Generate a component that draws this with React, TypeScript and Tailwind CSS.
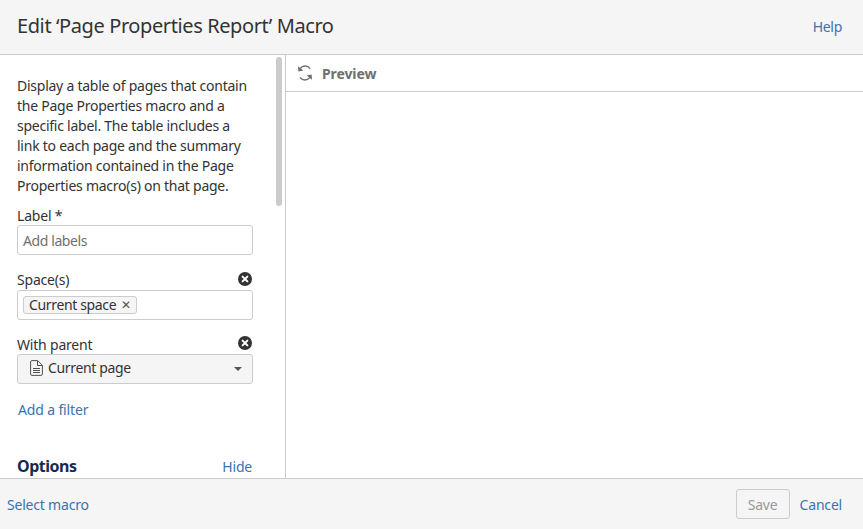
const linkClass = 'text-[14px] leading-5 text-[#3b73af]';

const ClearIcon = ({ className }: { className?: string }) => (
  <svg width="14" height="14" viewBox="0 0 14 14" className={className}>
    <circle cx="7" cy="7" r="7" fill="#333333" />
    <path d="M4.6 4.6l4.8 4.8M9.4 4.6l-4.8 4.8" stroke="#ffffff" strokeWidth="2" strokeLinecap="round" />
  </svg>
);

const RefreshIcon = () => (
  <svg width="16" height="16" viewBox="0 0 16 16" fill="none" className="block">
    <path d="M13.2 3.6A6.4 6.4 0 0 0 3 3.6" stroke="#707070" strokeWidth="1.4" />
    <path d="M1 1.2l.4 5.2 5-.9z" fill="#707070" />
    <path d="M2.8 12.4a6.4 6.4 0 0 0 10.2 0" stroke="#707070" strokeWidth="1.4" />
    <path d="M15 14.8l-.4-5.2-5 .9z" fill="#707070" />
  </svg>
);

const PageIcon = () => (
  <svg width="13" height="16" viewBox="0 0 13 16" fill="none" className="block">
    <path d="M1.8.6h5.9l4.7 4.7v8.6a1.5 1.5 0 0 1-1.5 1.5H1.8a1.3 1.3 0 0 1-1.2-1.5V2a1.3 1.3 0 0 1 1.2-1.4z" stroke="#505050" strokeWidth="1" />
    <path d="M7.5 1v4.5H12" stroke="#505050" strokeWidth="1" />
    <path d="M3 8.5h7M3 10.5h7M3 12.5h7" stroke="#505050" strokeWidth="1" />
  </svg>
);

const App = () => {
  return (
    <div className="w-[863px] h-[529px] flex flex-col overflow-hidden bg-white text-[#333333] font-['Noto_Sans',sans-serif] text-[14px]">
      {/* Header */}
      <div className="h-[55px] shrink-0 flex items-center justify-between pl-[17px] pr-[21px] pb-[2px] bg-[#f5f5f5] border-b border-[#cccccc]">
        <h1 className="text-[20px] leading-6 font-normal tracking-[-0.4px]">Edit ‘Page Properties Report’ Macro</h1>
        <a className={`${linkClass} tracking-[-0.3px] mt-[2px]`}>Help</a>
      </div>

      <div className="flex-1 min-h-0 flex">
        {/* Macro settings */}
        <div className="relative w-[286px] shrink-0 border-r border-[#cccccc] overflow-hidden pl-[17px] pt-[21px]">
          <div className="absolute left-[276px] top-[2px] w-[6px] h-[149px] rounded-[3px] bg-[#cccccc]" />
          <p className="w-[236px] leading-5 tracking-[-0.25px]">
            Display a table of pages that contain the Page Properties macro and a specific label. The table includes a link to each page and the summary information contained in the Page Properties macro(s) on that page.
          </p>

          <div className="w-[236px] mt-[10px]">
            <div className="leading-5 tracking-[-0.2px]">Label *</div>
            <div className="h-[30px] mt-[-1px] flex items-center pl-[5px] border border-[#cccccc] rounded-[3px] text-[#707070] tracking-[-0.4px]">
              Add labels
            </div>
          </div>

          <div className="w-[236px] mt-[15px]">
            <div className="flex items-center justify-between h-5 pr-[1px]">
              <span className="leading-5 tracking-[-0.2px]">Space(s)</span>
              <ClearIcon className="block mt-[-2px]" />
            </div>
            <div className="h-[30px] flex items-center pl-[5px] border border-[#cccccc] rounded-[3px]">
              <span className="h-[18px] flex items-center gap-[5px] pl-[5px] pr-[5px] bg-[#f5f5f5] border border-[#cccccc] rounded-[3px] leading-4 tracking-[-0.35px]">
                Current space
                <span className="text-[12px] leading-4 text-[#555555]">✕</span>
              </span>
            </div>
          </div>

          <div className="w-[236px] mt-[15px]">
            <div className="flex items-center justify-between h-5 pr-[1px]">
              <span className="leading-5 tracking-[-0.2px]">With parent</span>
              <ClearIcon className="block mt-[-4px]" />
            </div>
            <div className="h-[30px] mt-[-1px] pb-[3px] flex items-center pl-[12px] pr-[10px] bg-[#f5f5f5] border border-[#cccccc] rounded-[3px]">
              <PageIcon />
              <span className="ml-[5px] tracking-[-0.35px]">Current page</span>
              <span className="ml-auto w-0 h-0 mt-[3px] border-x-[4px] border-x-transparent border-t-[4px] border-t-[#555555]" />
            </div>
          </div>

          <a className={`${linkClass} block mt-[16px] ml-[1px] tracking-[-0.15px]`}>Add a filter</a>

          <div className="w-[235px] mt-[36px] flex items-baseline justify-between">
            <span className="text-[16px] leading-5 font-bold text-[#172b4d] tracking-[-0.5px]">Options</span>
            <a className={`${linkClass} tracking-[-0.2px]`}>Hide</a>
          </div>
        </div>

        {/* Preview */}
        <div className="flex-1 min-w-0">
          <div className="h-[37px] flex items-center pl-[11px] gap-[9px] border-b border-[#cccccc]">
            <RefreshIcon />
            <span className="font-bold text-[#707070] tracking-[-0.1px]">Preview</span>
          </div>
        </div>
      </div>

      {/* Footer */}
      <div className="h-[51px] shrink-0 flex items-center pl-[7px] pr-[21px] bg-[#f5f5f5] border-t border-[#cccccc]">
        <a className={`${linkClass} tracking-[-0.2px] mt-[2px]`}>Select macro</a>
        <button className="ml-auto w-[54px] h-[30px] bg-[#f5f5f5] border border-[#cccccc] rounded-[3px] text-[#999999] tracking-[-0.2px]">
          Save
        </button>
        <a className={`${linkClass} ml-[10px] tracking-[-0.2px] mt-[2px]`}>Cancel</a>
      </div>
    </div>
  );
};

export default App;
